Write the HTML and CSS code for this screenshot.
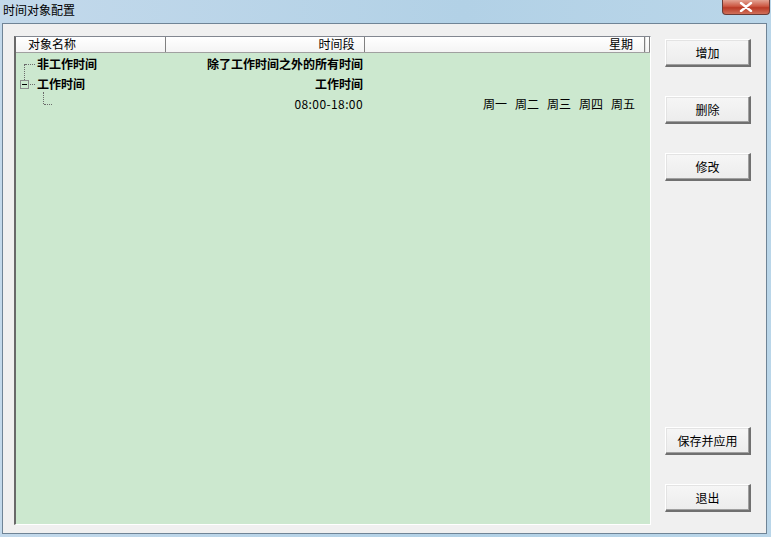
FILE: index.html
```html
<!DOCTYPE html>
<html lang="zh">
<head>
<meta charset="utf-8">
<title>时间对象配置</title>
<link rel="stylesheet" href="styles.css">
</head>
<body>
<div class="window">
  <div class="titlebar">
    <span class="title">时间对象配置</span>
    <div class="close"><svg width="14" height="10" viewBox="0 0 14 10"><path d="M2 1 L12 9 M12 1 L2 9" stroke="#fff" stroke-width="2.4" stroke-linecap="round"/></svg></div>
  </div>
  <div class="client">
    <div class="list">
      <div class="header">
        <div class="hcol c1">对象名称</div>
        <div class="hcol c2">时间段</div>
        <div class="hcol c3">星期</div>
        <div class="hcol c4"></div>
      </div>
      <div class="rows">
        <div class="row">
          <div class="cell c1 tree">
            <span class="vline v1"></span>
            <span class="hline h1"></span>
            <b class="name">非工作时间</b>
          </div>
          <div class="cell c2"><b>除了工作时间之外的所有时间</b></div>
          <div class="cell c3"></div>
        </div>
        <div class="row">
          <div class="cell c1 tree">
            <span class="minus"></span>
            <span class="hline h2"></span>
            <b class="name">工作时间</b>
          </div>
          <div class="cell c2"><b>工作时间</b></div>
          <div class="cell c3"></div>
        </div>
        <div class="row">
          <div class="cell c1 tree">
            <span class="vline v3"></span>
            <span class="hline h3"></span>
          </div>
          <div class="cell c2 time">08:00-18:00</div>
          <div class="cell c3 days"><span>周一</span><span>周二</span><span>周三</span><span>周四</span><span>周五</span></div>
        </div>
      </div>
    </div>
    <div class="buttons">
      <div class="group">
        <button class="btn">增加</button>
        <button class="btn">删除</button>
        <button class="btn">修改</button>
      </div>
      <div class="group">
        <button class="btn">保存并应用</button>
        <button class="btn">退出</button>
      </div>
    </div>
  </div>
</div>
</body>
</html>
```
FILE: styles.css
```css
* { box-sizing: border-box; }
html, body { margin: 0; padding: 0; }
body {
  width: 771px;
  height: 537px;
  overflow: hidden;
  font-family: "Noto Sans CJK SC", "Noto Sans", sans-serif;
  font-size: 12px;
  color: #000;
}
.window {
  width: 771px;
  height: 537px;
  background: linear-gradient(to right, #c3d9eb, #b2d1e6 60%, #bad6e9);
  padding: 0 4px 3px 2px;
  display: flex;
  flex-direction: column;
}
.titlebar {
  height: 23px;
  flex: none;
  position: relative;
  display: flex;
  align-items: center;
}
.title {
  margin-left: 1px;
  margin-top: -4px;
  font-size: 12px;
  line-height: 14px;
}
.close {
  position: absolute;
  right: -3px;
  top: 0;
  width: 48px;
  height: 15px;
  border: 1px solid #6a3b36;
  border-top: none;
  border-radius: 0 0 4px 4px;
  background: linear-gradient(#e3a393, #cc5843 45%, #b93a26 55%, #d0705a);
  display: flex;
  align-items: center;
  justify-content: center;
}
.client {
  flex: 1;
  background: #f0f0f0;
  border: 1px solid #6f8496;
  display: flex;
  padding: 12px 14px 8px 11px;
  gap: 14px;
}
.list {
  width: 637px;
  border-top: 1px solid #828790;
  border-left: 2px solid #696969;
  border-right: 1px solid #fff;
  border-bottom: 1px solid #fff;
  background: #cce8cf;
  display: flex;
  flex-direction: column;
}
.header {
  height: 16px;
  display: flex;
  background: #fff;
  border-bottom: 1px solid #a0a0a0;
  flex: none;
}
.hcol {
  height: 15px;
  line-height: 14px;
  border-right: 1px solid #808080;
  background: linear-gradient(#ffffff, #f4f4f4);
  padding: 0 10px;
  white-space: nowrap;
}
.header .c1 { width: 150px; padding-left: 12px; }
.header .c2 { width: 200px; text-align: right; }
.header .c3 { width: 280px; text-align: right; padding-right: 11px; }
.header .c4 { width: 5px; padding: 0; border-left: 1px solid #e0e0e0; }
.rows { padding-top: 1px; }
.row {
  height: 20px;
  display: flex;
  align-items: center;
}
.cell {
  white-space: nowrap;
  height: 20px;
  line-height: 20px;
}
.cell.c1 { width: 150px; }
.cell.c2 { width: 200px; text-align: right; padding-right: 3px; }
.cell.c3 { width: 280px; text-align: right; padding-right: 11px; }
.time { letter-spacing: 0.4px; padding-right: 2px; }
.days { display: flex; justify-content: flex-end; gap: 8px; }
.tree { position: relative; }
.name { position: absolute; left: 21px; top: 0; }
.vline {
  position: absolute;
  border-left: 1px dotted #6b6b6b;
}
.hline {
  position: absolute;
  border-top: 1px dotted #6b6b6b;
  height: 0;
}
.v1 { left: 8px; top: 10px; height: 16px; }
.h1 { left: 9px; top: 10px; width: 10px; }
.minus {
  position: absolute;
  left: 4px;
  top: 6px;
  width: 9px;
  height: 9px;
  border: 1px solid #8c8c8c;
  background: #cce8cf;
}
.minus::after {
  content: "";
  position: absolute;
  left: 1px;
  top: 3px;
  width: 5px;
  height: 1px;
  background: #000;
}
.h2 { left: 14px; top: 10px; width: 5px; }
.v3 { left: 27px; top: -2px; height: 12px; }
.h3 { left: 28px; top: 10px; width: 8px; }
.buttons {
  width: 86px;
  display: flex;
  flex-direction: column;
  justify-content: space-between;
  padding-top: 3px;
  padding-bottom: 13px;
}
.group {
  display: flex;
  flex-direction: column;
  gap: 29px;
}
.btn {
  width: 86px;
  height: 28px;
  font-family: "Noto Sans CJK SC", "Noto Sans", sans-serif;
  font-size: 12px;
  color: #000;
  background: linear-gradient(#f6f6f6, #ececec);
  border-top: 1px solid #fff;
  border-left: 1px solid #fff;
  border-right: 2px solid #707070;
  border-bottom: 2px solid #707070;
  box-shadow: inset -1px -1px 0 #a0a0a0, inset 1px 1px 0 #e3e3e3;
  padding: 0;
  margin: 0;
}
```
